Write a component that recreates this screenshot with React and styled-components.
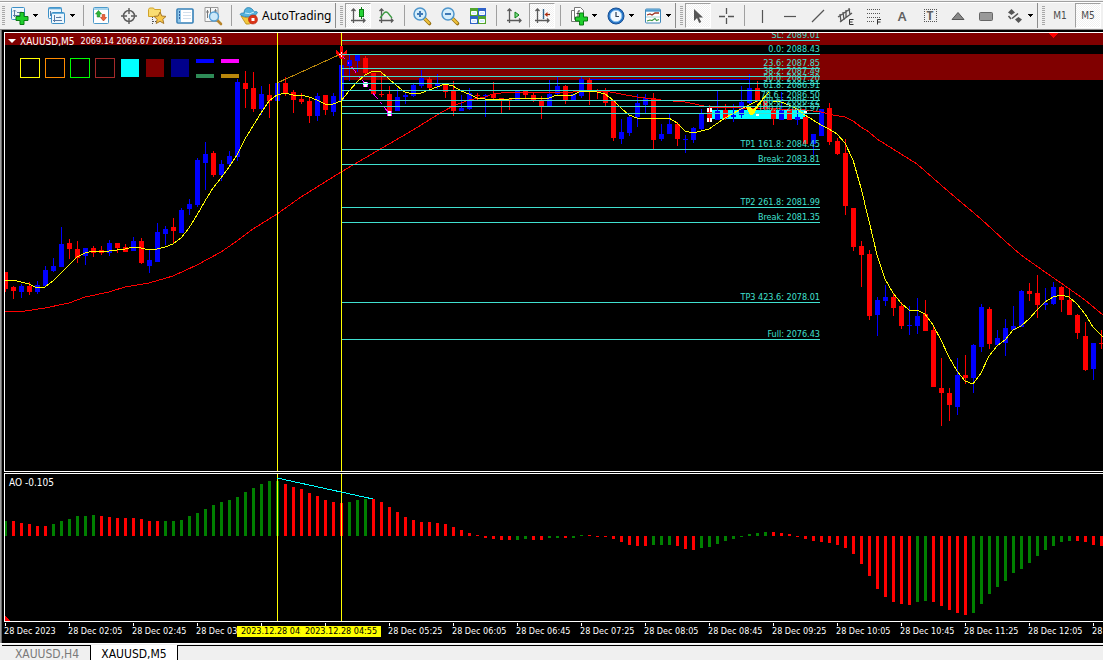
import React from "react";
import styled, { createGlobalStyle, css } from "styled-components";

const Global = createGlobalStyle`
  * { box-sizing: border-box; }
  body { margin: 0; background: #f0f0f0; overflow: hidden; }
  button { font: inherit; color: inherit; }
`;

const uiFont = `"DejaVu Sans Condensed", "DejaVu Sans", sans-serif`;

const Page = styled.div`
  display: flex;
  flex-direction: column;
  min-height: 100vh;
  font-family: ${uiFont};
  font-size: 9px;
  color: #fff;
`;

/* ---------- toolbar ---------- */

const Toolbar = styled.header`
  display: flex;
  height: 30px;
  padding: 3px 0 1px;
  background: linear-gradient(#f0f0f0 1px, #a0a0a0 1px 2px, #fff 2px 3px, #f0f0f0 3px);
  border-bottom: 1px solid #8a8a8a;
  overflow: hidden;
`;

const Group = styled.div`
  display: flex;
  flex: none;
  align-items: center;
  border-right: ${(p) => (p.$last ? "0" : "1px solid #8c8c8c")};
`;

const Grip = styled.span`
  flex: none;
  width: ${(p) => (p.$first ? 5 : 8)}px;
  height: 20px;
  background: repeating-linear-gradient(#a8a8a8 0 1px, transparent 1px 2px) ${(p) => (p.$first ? 2 : 4)}px 0 / 3px 100% no-repeat;
`;

const Divider = styled.span`
  flex: none;
  width: 8px;
  height: 21px;
  background: linear-gradient(#a0a0a0, #a0a0a0) 4px 0 / 1px 100% no-repeat;
`;

const pressed = css`
  border-color: #a0a0a0 #fff #fff #a0a0a0;
  background: repeating-conic-gradient(#fff 0 25%, #f0f0f0 0 50%) 0 0 / 2px 2px;
`;

const ToolButton = styled.button`
  flex: none;
  display: flex;
  align-items: center;
  justify-content: center;
  width: 26px;
  height: 25px;
  margin: 0 1px;
  padding: 0;
  border: 1px solid transparent;
  background: none;
  color: #4c4c4c;
  font-size: 10px;
  ${(p) => p.$on && pressed}
`;

const DropButton = styled(ToolButton)`
  width: 35px;
  gap: 4px;
  padding-left: 3px;
`;

const TradeButton = styled(ToolButton)`
  width: 98px;
  justify-content: flex-start;
  gap: 4px;
  padding-left: 3px;
  color: #000;
  font-family: "Noto Sans", "Open Sans", sans-serif;
  font-size: 12px;
`;

const Glyph = styled.svg`
  flex: none;
  width: 18px;
  height: 18px;
  overflow: visible;
`;

const CaretShape = styled.svg`
  flex: none;
  width: 6px;
  height: 4px;
`;

const Caret = () => (
  <CaretShape viewBox="0 0 6 4" aria-hidden="true">
    <path d="M0 0h5v1h-1v1h-1v1h-1v-1h-1v-1h-1z" fill="#000" />
  </CaretShape>
);

const Axes = () => (
  <path d="M4.500 2v14M2 13.500h14M2.500 4l2-2 2 2M14 11.500l2 2-2 2" fill="none" stroke="#5a5a5a" strokeWidth="1.300" />
);

const Plus = ({ x, y }) => (
  <path
    transform={`translate(${x} ${y})`}
    d="M4 0h4v4h4v4h-4v4h-4v-4h-4v-4h4z"
    fill="#1fcf2c"
    stroke="#087c12"
  />
);

const Lens = ({ minus }) => (
  <>
    <path d="M11 11l5.500 5.500" stroke="#9a7414" strokeWidth="3.600" strokeLinecap="round" />
    <path d="M11.500 11.500l4.500 4.500" stroke="#f0c23c" strokeWidth="2" strokeLinecap="round" />
    <circle cx="7" cy="7" r="6" fill="#d5eefb" stroke="#4f96cc" strokeWidth="1.500" />
    <path d={minus ? "M4 7h6" : "M4 7h6M7 4v6"} stroke="#3f79b5" strokeWidth="2" />
  </>
);

const icons = {
  newChart: (
    <>
      <rect x="0.500" y="0.500" width="13" height="12" rx="1" fill="#eef7fd" stroke="#3c8fc6" />
      <path d="M3.500 3v7M2 8.500h9M3.500 3l-1.500 1.500M3.500 3l1.500 1.500M6 5.500h5l-1-1" fill="none" stroke="#5c7ba4" />
      <Plus x={5} y={5.5} />
    </>
  ),
  profiles: (
    <>
      <rect x="0.500" y="0.500" width="13" height="11" rx="1" fill="#eef7fd" stroke="#3c8fc6" />
      <path d="M0.500 1.500h13" stroke="#5ba6d6" strokeWidth="1.600" />
      <path d="M2.500 4v5" stroke="#5c7ba4" />
      <rect x="3.500" y="5.500" width="13" height="11" rx="1" fill="#eef7fd" stroke="#3c8fc6" />
      <path d="M4 6.500h12" stroke="#6db3df" strokeWidth="1" />
      <path d="M6.500 8v7M5 13.500h9M8 10.500h5l-1-1" fill="none" stroke="#5c7ba4" />
    </>
  ),
  market: (
    <>
      <rect x="1.500" y="0.500" width="15" height="16" rx="1" fill="#fff" stroke="#4d9bcb" />
      <path d="M2 2h14" stroke="#8bc8ea" strokeWidth="1.500" />
      <path d="M6.500 3.500l3 3.500h-1.700v3h-2.600v-3h-1.700z" fill="#2eb837" stroke="#178420" strokeWidth="0.600" />
      <path d="M11.500 14l3-3.500h-1.700v-3h-2.600v3h-1.700z" fill="#f0643a" stroke="#b33516" strokeWidth="0.600" />
    </>
  ),
  target: (
    <g fill="none" stroke="#5c5c5c">
      <circle cx="9" cy="9" r="5.500" strokeWidth="1.500" />
      <path d="M9 1v6M9 11v6M1 9h6M11 9h6" strokeWidth="1.400" />
    </g>
  ),
  favorites: (
    <>
      <path d="M0.500 2.500l1-1.500h4l1 1.500h6v7h-12z" fill="#f9dd72" stroke="#d0a22a" />
      <path d="M4.500 10v7M5 14.500h4" stroke="#555" strokeDasharray="1 1" />
      <path d="M12 5l1.800 4 4.200 0.400-3.200 2.900 1 4.200-3.800-2.200-3.800 2.200 1-4.200-3.200-2.900 4.200-0.400z" fill="#f8c94a" stroke="#a6782a" />
    </>
  ),
  navigator: (
    <>
      <rect x="1" y="2" width="16" height="14" rx="1" fill="#fff" stroke="#3580b8" strokeWidth="1.600" />
      <rect x="2" y="3" width="3" height="12" fill="#8cc6ea" />
      <path d="M3 5h1M3 8h1M3 11h1" stroke="#123c86" strokeWidth="1.400" />
      <path d="M7 5.500h8M7 8.500h8M7 11.500h8" stroke="#d3e0ec" />
    </>
  ),
  tester: (
    <>
      <path d="M1 0.500h13v14h-13z" fill="#f7f7f7" stroke="#9a9a9a" />
      <path d="M3.500 3v8M6.500 1v6M11.500 2v5M2 5h3M10 4h3" stroke="#777" />
      <path d="M13 13l4 4" stroke="#b8862c" strokeWidth="2.600" strokeLinecap="round" />
      <circle cx="10" cy="9.500" r="4.500" fill="#c7e6f8" fillOpacity="0.900" stroke="#569fd2" strokeWidth="1.400" />
    </>
  ),
  auto: (
    <>
      <path d="M1 9q8 4 15-1l-3 7q-4 3-7 2z" fill="#f2c73d" stroke="#b98a17" strokeWidth="0.800" />
      <path d="M4 6c0-7 8-7 10-1 3-1 4 0 3 1.500-3 3.500-12 4.500-16.500 1.500-1-1.500 1-2 3.500-2z" fill="#55b3dd" stroke="#287fad" strokeWidth="0.800" />
      <path d="M5 6q5 2 9-1" stroke="#c8effd" fill="none" />
      <circle cx="13" cy="12.500" r="4.500" fill="#da3418" stroke="#b31f0a" strokeWidth="0.600" />
      <rect x="11.500" y="11" width="3" height="3" fill="#fff" />
    </>
  ),
  candles: (
    <>
      <Axes />
      <path d="M12.500 0v12" stroke="#0a7d14" />
      <rect x="10.500" y="2.500" width="4" height="7" fill="#27d336" stroke="#0a7d14" />
    </>
  ),
  line: (
    <>
      <Axes />
      <path d="M3 11l4-5q2-2 4 0l4 5" fill="none" stroke="#3c9a43" strokeWidth="1.300" />
    </>
  ),
  zoomIn: <Lens />,
  zoomOut: <Lens minus />,
  tile: (
    <>
      <rect x="1" y="1" width="8" height="8" fill="#51a52d" />
      <rect x="9" y="1" width="8" height="8" fill="#2f62c8" />
      <rect x="1" y="9" width="8" height="8" fill="#2f62c8" />
      <rect x="9" y="9" width="8" height="8" fill="#51a52d" />
      <path d="M2.500 4.500h5v3h-5zM10.500 4.500h5v3h-5zM2.500 12.500h5v3h-5zM10.500 12.500h5v3h-5z" fill="#d9ecff" stroke="#fff" />
    </>
  ),
  scroll: (
    <>
      <Axes />
      <path d="M10 5l4 3-4 3z" fill="#7be084" stroke="#0a7d14" />
    </>
  ),
  shift: (
    <>
      <Axes />
      <path d="M10.500 2v10" stroke="#35668c" strokeWidth="1.400" />
      <path d="M17 7.500h-4" stroke="#8e2c10" strokeWidth="1.300" />
      <path d="M11.500 7.500l3-2.500v5z" fill="#b52f10" />
    </>
  ),
  indicators: (
    <>
      <path d="M1.500 3.500h8v11h-8z" fill="#fff" stroke="#777" />
      <path d="M4.500 0.500h6l3 3v9h-9z" fill="#fff" stroke="#777" />
      <path d="M10 4q-2-1-2 1v5M6.500 6.500h3" fill="none" stroke="#444" />
      <Plus x={5.5} y={6} />
    </>
  ),
  clock: (
    <>
      <circle cx="9" cy="9" r="8" fill="#2674c6" stroke="#174f93" />
      <circle cx="9" cy="9" r="5.800" fill="#f3faff" stroke="#8cc3f0" />
      <path d="M9 5v4.500h3" fill="none" stroke="#345" strokeWidth="1.200" />
    </>
  ),
  template: (
    <>
      <rect x="1.500" y="2" width="15" height="14" rx="1" fill="#fff" stroke="#3e86b9" />
      <path d="M2 3.500h14" stroke="#4d9bd0" strokeWidth="2.400" />
      <path d="M3 8l3-1 2 1 3-2 4 0" fill="none" stroke="#9c3524" strokeWidth="1.300" />
      <path d="M2 10h14" stroke="#9cc" strokeWidth="0.800" />
      <path d="M3 14l3-1 2 0.500 3-2 1.500 2 2.500-1" fill="none" stroke="#3c9a43" strokeWidth="1.200" />
    </>
  ),
  cursor: <path d="M5 2v12l3-3 2.200 5 2-1-2.200-4.500h4z" fill="#555" />,
  cross: <path d="M9.500 1v6M9.500 11v6M2 9.500h6M11 9.500h6" stroke="#555" strokeWidth="1.300" />,
  vert: <path d="M9.500 3v13" stroke="#555" strokeWidth="1.200" />,
  horiz: <path d="M3 9.500h12" stroke="#555" strokeWidth="1.200" />,
  diag: <path d="M3 15l12-12" stroke="#555" strokeWidth="1.300" />,
  channel: (
    <>
      <path d="M1 10l12-8M3 15l12-9M3 7l1 8M6 5l1 8M9 3l0 8M12 1l1 7" stroke="#555" fill="none" strokeWidth="1.300" />
      <path d="M16.500 12.500h-4v5h4M12.500 15h3" stroke="#333" fill="none" />
    </>
  ),
  fibo: (
    <>
      <path d="M2 2.500h14M2 6.500h14M2 10.500h14M2 14.500h8" stroke="#555" strokeDasharray="1 1" />
      <path d="M16 12.500h-3.500v5M12.500 15h3" stroke="#333" fill="none" />
    </>
  ),
  triangle: <path d="M9 5.500l6 7h-12z" fill="#888" stroke="#555" />,
  rect: <rect x="2.500" y="5.500" width="13" height="8" rx="1" fill="#999" stroke="#666" />,
  arrows: (
    <>
      <path d="M5.500 2l3.500 3.500-3.500 2.500-3.500-2.500z" fill="#555" />
      <path d="M12.500 16l3.500-3.500-3.500-2.500-3.500 2.500z" fill="#555" />
      <path d="M2.500 9l2.500 3M6 11.500l6-5" stroke="#555" strokeWidth="1.500" />
    </>
  ),
};

const Letter = styled.span`
  font-family: "Noto Sans", sans-serif;
  font-size: 13px;
  font-weight: 600;
  line-height: 18px;
  color: #606060;
`;

const BoxedLetter = styled(Letter)`
  width: 13px;
  height: 13px;
  border: 1px dotted #555;
  font-size: 12px;
  font-weight: 700;
  line-height: 11px;
  text-align: center;
`;

const Tool = ({ name, icon, on, drop, children }) => {
  const Button = drop ? DropButton : ToolButton;
  return (
    <Button type="button" aria-label={name} title={name} $on={on}>
      {children || <Glyph viewBox="0 0 18 18" aria-hidden="true">{icons[icon]}</Glyph>}
      {drop && <Caret />}
    </Button>
  );
};

/* ---------- chart window ---------- */

const Frame = styled.main`
  flex: 1;
  display: flex;
  flex-direction: column;
  padding: 2px 0 0 2px;
  background: #000;
  border-left: 1px solid #a0a0a0;
  box-shadow: inset 1px 0 #696969;
`;

const Panel = styled.section`
  position: relative;
  height: ${(p) => p.$height}px;
  margin: 0 0 1px 1px;
  border: solid #fff;
  border-width: 1px 0 1px 1px;
  overflow: hidden;
`;

const Plot = styled.svg`
  display: block;
  width: 100%;
  height: 100%;
  shape-rendering: crispEdges;
`;

const Caption = styled.div`
  position: absolute;
  top: 1px;
  left: 3px;
  display: flex;
  align-items: center;
  gap: 4px;
  height: 14px;
  white-space: pre;
`;

const Symbol = styled.span`
  font-size: 10px;
`;

const Quotes = styled.span`
  padding-left: 2px;
`;

const Reading = styled(Caption)`
  top: 1px;
  left: 4px;
`;

const Marker = styled.svg`
  width: 8px;
  height: 4px;
`;

const Swatches = styled.div`
  position: absolute;
  top: 25px;
  left: 15px;
  display: flex;
  gap: 5px;
`;

const Swatch = styled.span`
  width: 20px;
  height: 20px;
  border: 1px solid ${(p) => (p.$fill ? "transparent" : p.$color)};
  background: ${(p) => (p.$fill ? p.$color : "none")};
  background-clip: padding-box;
`;

const DashPair = styled.span`
  width: 20px;
  height: 20px;
  padding: 0 1px;
  border: solid transparent;
  border-width: 1px 0 0;
  background: linear-gradient(${(p) => p.$top} 4px, transparent 4px 15px, ${(p) => p.$bottom} 15px) content-box;
`;

const FibText = styled.text`
  font-size: 9px;
  fill: #40e0d0;
  text-anchor: end;
`;

const B = "#0000ff";
const R = "#ff0000";

/* high, body top, body bottom, low, colour; one candle every 8 pixels */
const candles = [
  [272, 272, 289, 292, R], [286, 287, 291, 299, R], [284, 286, 292, 298, B], [282, 286, 292, 295, R],
  [281, 285, 292, 294, B], [266, 270, 286, 286, B], [258, 266, 271, 272, B], [227, 244, 267, 267, B],
  [239, 243, 249, 259, R], [241, 249, 258, 263, R], [248, 248, 256, 265, B], [246, 248, 253, 257, R],
  [246, 250, 253, 255, R], [240, 243, 253, 256, B], [243, 243, 248, 253, R], [244, 247, 252, 252, R],
  [237, 241, 251, 251, B], [238, 241, 263, 264, R], [250, 260, 266, 273, B], [223, 232, 262, 262, B],
  [226, 229, 234, 245, B], [218, 227, 231, 243, R], [208, 210, 233, 233, B], [199, 204, 209, 215, B],
  [158, 160, 205, 207, B], [142, 154, 163, 190, B], [151, 153, 175, 177, R], [160, 164, 175, 181, B],
  [151, 156, 164, 165, B], [79, 82, 157, 161, B], [71, 83, 89, 108, R], [72, 88, 109, 112, R],
  [86, 94, 109, 115, B], [84, 95, 101, 118, R], [83, 83, 101, 101, B], [77, 83, 93, 96, R],
  [90, 92, 100, 113, R], [93, 99, 102, 104, R], [97, 101, 116, 123, R], [93, 96, 116, 121, B],
  [95, 95, 110, 115, R], [93, 96, 112, 116, B], [65, 65, 101, 101, B], [55, 60, 66, 81, B],
  [55, 55, 61, 72, B], [56, 58, 73, 74, R], [73, 73, 94, 95, R], [73, 94, 95, 97, R],
  [86, 94, 112, 114, R], [88, 97, 111, 111, B], [93, 95, 97, 104, B], [84, 85, 96, 97, B],
  [70, 78, 86, 88, B], [77, 79, 88, 90, R], [74, 83, 86, 89, B], [84, 84, 92, 98, R],
  [81, 91, 111, 116, R], [95, 108, 111, 111, B], [88, 93, 109, 110, B], [93, 95, 96, 100, R],
  [94, 95, 96, 117, B], [82, 94, 98, 99, R], [98, 98, 99, 113, R], [99, 99, 100, 110, R],
  [91, 91, 100, 100, B], [91, 91, 95, 99, R], [93, 95, 100, 102, R], [96, 100, 106, 119, R],
  [80, 94, 106, 106, B], [76, 86, 94, 95, B], [85, 86, 100, 104, R], [94, 94, 101, 101, B],
  [77, 79, 96, 98, B], [78, 80, 91, 105, R], [89, 90, 91, 99, R], [88, 92, 103, 106, R],
  [101, 101, 138, 141, R], [119, 132, 139, 144, B], [115, 117, 133, 136, B], [94, 103, 117, 127, B],
  [94, 98, 105, 113, B], [93, 98, 140, 149, R], [124, 134, 139, 141, B], [113, 124, 134, 134, B],
  [122, 124, 139, 146, R], [135, 139, 140, 153, B], [127, 128, 140, 143, B], [109, 113, 129, 131, B],
  [105, 109, 119, 121, R], [91, 111, 120, 120, B], [104, 110, 118, 120, R], [104, 115, 117, 122, B],
  [86, 102, 115, 118, B], [74, 88, 103, 105, B], [81, 88, 100, 102, R], [100, 100, 108, 110, R],
  [108, 109, 119, 125, R], [92, 110, 120, 120, B], [109, 110, 120, 120, R], [110, 117, 120, 125, B],
  [117, 117, 144, 144, R], [134, 134, 144, 155, B], [109, 109, 136, 136, B], [103, 108, 142, 145, R],
  [138, 141, 154, 155, R], [139, 153, 206, 215, R], [208, 208, 247, 251, R], [241, 246, 255, 287, R],
  [250, 254, 316, 320, R], [297, 300, 315, 336, B], [285, 297, 301, 306, B], [294, 297, 308, 316, R],
  [302, 306, 326, 329, R], [306, 325, 326, 335, B], [298, 316, 326, 334, B], [300, 314, 331, 331, R],
  [325, 330, 387, 387, R], [358, 388, 393, 426, R], [388, 393, 405, 421, R], [358, 375, 407, 415, B],
  [355, 375, 378, 384, R], [344, 345, 378, 393, B], [304, 307, 347, 352, B], [307, 309, 344, 349, R],
  [330, 338, 345, 345, B], [319, 328, 343, 356, B], [306, 326, 330, 330, B], [290, 291, 327, 327, B],
  [283, 291, 294, 301, R], [275, 293, 305, 318, R], [288, 303, 305, 310, B], [282, 287, 304, 305, B],
  [286, 287, 300, 312, R], [290, 300, 315, 315, R], [314, 315, 333, 339, R], [322, 336, 370, 371, R],
  [343, 343, 369, 380, B], [330, 343, 344, 349, R],
];

const fastAverage =
  "5,281 13,280 21,282 29,284 37,288 45,287 53,281 61,273 69,265 77,257 85,253 93,251 109,251 117,250 125,249 133,247 141,248 149,250 157,249 165,247 173,244 181,238 189,228 197,215 205,201 213,188 221,178 229,167 237,155 245,139 253,126 261,113 269,101 277,95 285,93 293,95 301,95 309,97 317,100 325,104 333,104 341,101 349,91 357,82 365,75 373,71 381,72 389,79 397,86 405,92 413,94 421,93 429,90 437,87 445,84 453,86 461,91 469,94 477,98 485,99 509,99 525,98 541,99 549,98 557,95 573,95 581,91 589,91 597,92 605,94 613,100 621,108 629,115 637,118 669,118 677,123 685,131 693,133 709,129 725,118 741,109 749,105 757,101 765,100 773,101 781,102 789,105 797,109 805,115 813,120 821,125 829,129 837,134 845,143 853,160 861,188 869,221 877,255 885,279 893,293 901,303 909,310 917,310 925,314 933,325 941,340 949,357 957,371 965,381 973,384 981,373 989,356 997,346 1005,340 1013,330 1021,326 1029,319 1037,310 1045,302 1053,297 1061,295 1069,297 1077,304 1085,314 1093,327 1103,337";

const slowAverage =
  "5,312 25,311 45,308 69,303 85,297 109,292 125,287 149,283 173,276 197,265 221,252 237,241 253,229 277,214 301,197 325,182 341,172 365,158 389,144 413,130 437,115 453,106 469,100 485,97 493,94 509,92 541,93 573,92 605,91 621,94 637,97 661,100 685,102 709,107 741,108 780,109 805,110 821,112 833,115 845,117 853,121 861,127 869,132 877,139 901,154 917,164 933,178 949,192 981,219 1005,241 1021,255 1045,272 1061,283 1085,300 1103,315";

const levels = [
  [40, "SL: 2089.01"], [54, "0.0: 2088.43"], [68, "23.6: 2087.85"], [76, "38.2: 2087.49"],
  [83, "50.0: 2087.20"], [90, "61.8: 2086.91"], [100, "78.6 : 2086.50"], [106, "88.6: 2086.22"],
  [113, "100.0: 2085.97"], [149, "TP1 161.8: 2084.45"], [164, "Break: 2083.81"],
  [207, "TP2 261.8: 2081.99"], [222, "Break: 2081.35"], [302, "TP3 423.6: 2078.01"], [339, "Full: 2076.43"],
];

/* far end of each histogram bar, grouped in runs of one colour */
const G = "#008000";
const oscillatorRuns = [
  [G, 521], [R, 521, 523, 524, 526, 526], [G, 524, 521, 519, 516, 516, 515],
  [R, 516, 517, 518, 518, 518, 519, 521, 521],
  [G, 521, 521, 520, 516, 513, 509, 505, 502, 500, 497, 492, 488, 484, 481, 481],
  [R, 484, 487, 489, 493, 496, 500, 502, 503], [G, 502, 500, 499],
  [R, 499, 502, 507, 512, 517, 520, 522, 522, 523, 524, 527, 530, 533, 535, 538, 539, 540, 540],
  [G, 540, 539], [R, 540, 540], [G, 538, 538], [R, 538], [G, 538, 535],
  [R, 535, 537, 537, 539, 542, 545, 546, 546], [G, 545, 545, 545], [R, 546, 549, 550],
  [G, 548, 547, 544, 541, 539, 537, 534, 533, 532],
  [R, 532, 533, 534, 537, 539, 541, 542, 543, 545, 548, 554, 564, 576, 589, 597, 602, 604, 605],
  [G, 602, 601], [R, 602, 606, 610, 613, 615],
  [G, 613, 604, 594, 587, 581, 573, 569, 563, 556, 550, 546, 542, 541], [R, 541, 542, 545, 546],
];
const oscillator = oscillatorRuns.flatMap(([color, ...ends]) => ends.map((end) => [end, color]));
const ZERO = 536;

const PriceChart = () => (
  <Plot role="img" aria-label="XAUUSD M5 candlestick chart">
    <g transform="translate(-5 -33)">
      <rect x="5" y="33" width="100%" height="12" fill="#800000" />
      <rect x="342" y="54" width="100%" height="26" fill="#800000" />
      <rect x="709" y="110" width="96" height="9" fill="#00ffff" />
      <path d="M589 79.500h160" stroke={B} />
      {candles.map(([high, top, bottom, low, color], i) => (
        <g key={i} fill={color}>
          <rect x={5 + i * 8} y={high} width="1" height={low - high} />
          <rect x={3 + i * 8} y={top} width="5" height={bottom - top} />
        </g>
      ))}
      <polyline points={slowAverage} fill="none" stroke={R} />
      <polyline points={fastAverage} fill="none" stroke="#ffff00" />
      <path d="M277 83L341 54" stroke="#b8860b" />
      <path d="M341 54L389 113" stroke="#ff00ff" strokeDasharray="7 4 2 4" />
      <path d="M277.500 33v440M341.500 33v440" stroke="#ffff00" />
      <path d="M340 46h3v7l4-3v4l-3 2-1 3h-3l-1-3-3-2v-4l4 3z" fill={R} />
      <path d="M338.500 54.500h6M341.500 52v5" stroke="#fff" strokeDasharray="2 1" />
      <path d="M363 82h5v5h-5zM387 111h5v5h-5z" fill="#ff00ff" />
      <path d="M364 82h3v5h-3zM388 111h3v5h-3zM363 84h5v1h-5zM387 113h5v1h-5z" fill="#fff" />
      <path d="M707 108h5v4h-5zM707 118h5v4h-5z" fill="#fff" />
      <path d="M709 108v14" stroke={R} />
      <path d="M756 114h3v2h-3zM804 111h3v2h-3z" fill="#fff" />
      {levels.map(([y, text]) => (
        <g key={y}>
          <path d={`M342 ${y}.5h478`} stroke="#40e0d0" />
          <FibText x="820" y={y - 2}>{text}</FibText>
        </g>
      ))}
      <path d="M746 107h4l3 3 4-5 11-13h1l-11 15-5 8h-3z" fill="#ffff00" />
      <path d="M1048 33h10l-5 5z" fill={R} />
    </g>
  </Plot>
);

const OscillatorChart = () => (
  <Plot role="img" aria-label="Awesome oscillator histogram">
    <g transform="translate(-5 -474)">
      {oscillator.map(([end, color], i) => (
        <rect key={i} x={4 + i * 8} y={Math.min(end, ZERO)} width="3" height={Math.abs(end - ZERO)} fill={color} />
      ))}
      <path d="M277.500 474v147M341.500 474v147" stroke="#ffff00" />
      <path d="M277 478L373 499" stroke="#00ffff" />
      <path d="M5 616l5 5h-5z" fill={R} />
    </g>
  </Plot>
);

const TimeAxis = styled.div`
  position: relative;
  display: flex;
  height: 20px;
  padding-left: 1px;
  overflow: hidden;
`;

const Tick = styled.span`
  flex: none;
  width: 64px;
  line-height: 16px;
  white-space: nowrap;
  background: linear-gradient(#fff, #fff) 1px 0 / 1px 3px no-repeat;
`;

const TimeFlag = styled.span`
  position: absolute;
  top: 3px;
  left: ${(p) => p.$at}px;
  width: 80px;
  height: 11px;
  line-height: 10px;
  text-align: center;
  white-space: nowrap;
  background: #ffff00;
  color: #000;
`;

const times = [
  "28 Dec 2023", "28 Dec 02:05", "28 Dec 02:45", "28 Dec 03:25", "28 Dec 04:05", "28 Dec 04:45",
  "28 Dec 05:25", "28 Dec 06:05", "28 Dec 06:45", "28 Dec 07:25", "28 Dec 08:05", "28 Dec 08:45",
  "28 Dec 09:25", "28 Dec 10:05", "28 Dec 10:45", "28 Dec 11:25", "28 Dec 12:05", "28 Dec 12:45",
];

/* ---------- chart tabs ---------- */

const Tabs = styled.nav`
  display: flex;
  height: 18px;
  padding: 2px 0 0 2px;
  background: linear-gradient(#fff 1px, #f0f0f0 1px);
`;

const Tab = styled.button`
  width: ${(p) => (p.$active ? 87 : 89)}px;
  padding: 1px 0 0 ${(p) => (p.$active ? 0 : 2)}px;
  border: solid #000;
  border-width: ${(p) => (p.$active ? "0 1px 0 0" : "1px 1px 0 0")};
  background: ${(p) => (p.$active ? "#fff" : "#f0f0f0")};
  color: ${(p) => (p.$active ? "#000" : "#7a7a7a")};
  font-size: 12px;
  line-height: 14px;
`;

const TabRest = styled.span`
  flex: 1;
  border-top: 1px solid #000;
`;

export default function App() {
  return (
    <Page>
      <Global />
      <Toolbar>
        <Group>
          <Grip $first />
          <Tool name="New chart" icon="newChart" drop />
          <Tool name="Profiles" icon="profiles" drop />
          <Divider />
          <Tool name="Market watch" icon="market" />
          <Tool name="Data window" icon="target" />
          <Tool name="Navigator" icon="favorites" />
          <Tool name="Terminal" icon="navigator" />
          <Tool name="Strategy tester" icon="tester" />
          <Divider />
          <TradeButton type="button">
            <Glyph viewBox="0 0 18 18" aria-hidden="true">{icons.auto}</Glyph>
            AutoTrading
          </TradeButton>
        </Group>
        <Group>
          <Grip />
          <Tool name="Candlesticks" icon="candles" on />
          <Tool name="Line chart" icon="line" />
          <Divider />
          <Tool name="Zoom in" icon="zoomIn" />
          <Tool name="Zoom out" icon="zoomOut" />
          <Tool name="Tile windows" icon="tile" />
          <Divider />
          <Tool name="Auto scroll" icon="scroll" />
          <Tool name="Chart shift" icon="shift" on />
          <Divider />
          <Tool name="Indicators" icon="indicators" drop />
          <Tool name="Periods" icon="clock" drop />
          <Tool name="Templates" icon="template" drop />
        </Group>
        <Group>
          <Grip />
          <Tool name="Cursor" icon="cursor" on />
          <Tool name="Crosshair" icon="cross" />
          <Divider />
          <Tool name="Vertical line" icon="vert" />
          <Tool name="Horizontal line" icon="horiz" />
          <Tool name="Trendline" icon="diag" />
          <Tool name="Equidistant channel" icon="channel" />
          <Tool name="Fibonacci retracement" icon="fibo" />
          <Tool name="Text"><Letter>A</Letter></Tool>
          <Tool name="Text label"><BoxedLetter>T</BoxedLetter></Tool>
          <Tool name="Triangle" icon="triangle" />
          <Tool name="Rectangle" icon="rect" />
          <Tool name="Arrows" icon="arrows" drop />
        </Group>
        <Group $last>
          <Grip />
          <ToolButton type="button">M1</ToolButton>
          <ToolButton type="button" $on>M5</ToolButton>
        </Group>
      </Toolbar>

      <Frame>
        <Panel $height={440}>
          <PriceChart />
          <Caption>
            <Marker viewBox="0 0 8 4" aria-hidden="true"><path d="M0 0h8l-4 4z" fill="#fff" /></Marker>
            <Symbol>XAUUSD,M5</Symbol>
            <Quotes>2069.14 2069.67 2069.13 2069.53</Quotes>
          </Caption>
          <Swatches>
            <Swatch $color="#ffff00" />
            <Swatch $color="#ff8c00" />
            <Swatch $color="#00ff00" />
            <Swatch $color="#a52a2a" />
            <Swatch $color="#00ffff" $fill />
            <Swatch $color="#800000" $fill />
            <Swatch $color="#00008b" $fill />
            <DashPair $top="#0000ff" $bottom="#2e8b57" />
            <DashPair $top="#ff00ff" $bottom="#b8860b" />
          </Swatches>
        </Panel>
        <Panel $height={149}>
          <OscillatorChart />
          <Reading>
            <Symbol>AO -0.105</Symbol>
          </Reading>
        </Panel>
        <TimeAxis>
          {times.map((t) => <Tick key={t}>{t}</Tick>)}
          <TimeFlag $at={234}>2023.12.28 04:15</TimeFlag>
          <TimeFlag $at={298}>2023.12.28 04:55</TimeFlag>
        </TimeAxis>
      </Frame>

      <Tabs>
        <Tab type="button">XAUUSD,H4</Tab>
        <Tab type="button" $active>XAUUSD,M5</Tab>
        <TabRest />
      </Tabs>
    </Page>
  );
}
